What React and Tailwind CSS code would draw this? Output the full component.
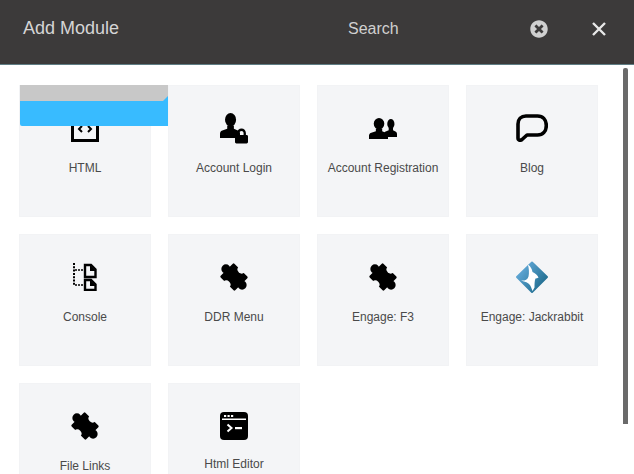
import React from 'react';
import { FaTimesCircle, FaLock } from 'react-icons/fa';

function Puzzle() {
  return (
    <svg className="shrink-0" width="32" height="32" viewBox="0 0 28 28">
      <g transform="rotate(45 14 14)">
        <rect x="5" y="5.500" width="18" height="17" rx="1" fill="#000" />
        <circle cx="4" cy="14" r="4" fill="#000" />
        <circle cx="24" cy="14" r="4" fill="#000" />
        <circle cx="14" cy="4.500" r="3.600" fill="#f4f5f7" />
        <circle cx="14" cy="23.500" r="3.600" fill="#f4f5f7" />
      </g>
    </svg>
  );
}

function HtmlIcon() {
  return (
    <svg width="28" height="28" viewBox="0 0 28 28">
      <rect x="1.500" y="1.500" width="25" height="25" fill="none" stroke="#000" strokeWidth="3" />
      <path d="M11 12l-3 3 3 3M17 12l3 3-3 3" fill="none" stroke="#000" strokeWidth="2" />
    </svg>
  );
}

function Person({ className }) {
  return (
    <svg className={className} viewBox="0 0 18 24" preserveAspectRatio="none">
      <ellipse cx="9.500" cy="6.500" rx="5" ry="6.500" fill="#000" />
      <path d="M6.500 12h6v3l4 2c1 .5 1.500 2 1.500 3v4H0v-4c0-1 .5-2.500 1.500-3l5-2z" fill="#000" />
    </svg>
  );
}

function LoginIcon() {
  return (
    <div className="relative w-[28px] h-[28px]">
      <Person className="absolute left-0 top-[-1px] w-[20px] h-[25px]" />
      <FaLock className="absolute right-0 bottom-[-2px] w-[13px] h-[16px] text-black" />
    </div>
  );
}

function UsersIcon() {
  return (
    <div className="relative w-[28px] h-[21px]">
      <Person className="absolute right-0 top-[1px] w-[13px] h-[18px]" />
      <Person className="absolute left-0 top-0 w-[19px] h-[21px]" />
    </div>
  );
}

function BlogIcon() {
  return (
    <svg width="32" height="28" viewBox="0 0 32 28">
      <path d="M10 2h11.500c5.500 0 8.800 3.800 8.800 9.500s-3.300 9.500-8.800 9.500H11l-5 4.500c-1.500 1.200-4 1-4-1.500V10c0-4.500 3-8 8-8z" fill="none" stroke="#000" strokeWidth="3.600" strokeLinejoin="round" />
    </svg>
  );
}

function ConsoleIcon() {
  return (
    <svg width="24" height="28" viewBox="0 0 24 28">
      <path d="M1 0v23" fill="none" stroke="#000" strokeWidth="2" strokeDasharray="2 1.300" />
      <path d="M2 7h8M2 22h8" fill="none" stroke="#000" strokeWidth="1.600" strokeDasharray="2 1" />
      <path d="M12 2h6l4.500 4.500V14H12zM12 17h6l4.500 4.500V27H12z" fill="none" stroke="#000" strokeWidth="2.400" />
      <path d="M17 2l6 6h-6zM17 17l6 6h-6z" fill="#000" />
    </svg>
  );
}

function RabbitIcon() {
  return (
    <svg width="34" height="34" viewBox="0 0 34 34">
      <defs>
        <linearGradient id="jr" x1="0.1" y1="0.2" x2="0.9" y2="0.8">
          <stop offset="0" stopColor="#62a9d8" />
          <stop offset="1" stopColor="#1f6c8e" />
        </linearGradient>
      </defs>
      <path d="M17 2.500L32 17 17 32 2 17z" fill="url(#jr)" strokeLinejoin="round" stroke="url(#jr)" strokeWidth="2" />
      <path d="M13.500 5c2 1.500 3.500 4 4 7 2.500 1 5 3 6 5.500-1 .5-2 1-3 1-1 2-1 6-1 9l-2 3.500-1.500-4c-1-3-3.500-4.500-7-5.500l-3-1c3 .5 6.500-.5 7.500-4 .8-3.500.5-8-.5-11.500z" fill="#fff" />
    </svg>
  );
}

function EditorIcon() {
  return (
    <svg width="28" height="28" viewBox="0 0 28 28">
      <rect width="28" height="28" rx="4" fill="#000" />
      <rect x="2" y="6.500" width="24" height="1.500" fill="#fff" />
      <path d="M4 3h2.200v2H4zM7.500 3h2.200v2H7.500zM11 3h2.200v2H11z" fill="#fff" />
      <path d="M7.500 12.500l4 3.500-4 3.500" fill="none" stroke="#fff" strokeWidth="2" />
      <rect x="15" y="15" width="7" height="2.200" fill="#fff" />
    </svg>
  );
}

const modules = [
  { name: 'HTML', icon: <HtmlIcon /> },
  { name: 'Account Login', icon: <LoginIcon /> },
  { name: 'Account Registration', icon: <UsersIcon /> },
  { name: 'Blog', icon: <BlogIcon /> },
  { name: 'Console', icon: <ConsoleIcon /> },
  { name: 'DDR Menu', icon: <Puzzle /> },
  { name: 'Engage: F3', icon: <Puzzle /> },
  { name: 'Engage: Jackrabbit', icon: <RabbitIcon /> },
  { name: 'File Links', icon: <Puzzle />, labelClass: 'mt-[19px]' },
  { name: 'Html Editor', icon: <EditorIcon />, labelClass: 'mt-[17px]' },
];

export default function App() {
  return (
    <div className="relative w-[634px] h-[474px] overflow-hidden bg-white font-['Liberation_Sans',Arial,sans-serif]">
      {/* Header */}
      <div className="flex items-center h-[65px] pb-[7px] bg-[#3c3a3a] border-b border-[#5f7d84]">
        <h1 className="ml-[23px] w-[325px] text-[18px] text-[#d5d5d5]">Add Module</h1>
        <span className="w-[182px] text-[16px] text-[#d0d0d0]">Search</span>
        <FaTimesCircle className="w-[18px] h-[18px] text-[#d0d0d0]" />
        <svg className="ml-[44px]" width="14" height="14" viewBox="0 0 14 14">
          <path d="M1 1l12 12M13 1L1 13" stroke="#e8e8e8" strokeWidth="2.400" />
        </svg>
      </div>

      {/* Module grid */}
      <div className="grid grid-cols-[repeat(4,132px)] gap-[17px] pt-[20px] pl-[19px]">
        {modules.map((mod) => (
          <div key={mod.name} className="flex flex-col items-center w-[132px] h-[132px] pt-[28px] bg-[#f4f5f7] border border-[#f2f3f5]">
            <div className="flex items-center justify-center h-[28px]">{mod.icon}</div>
            <p className={`${mod.labelClass || 'mt-[19px]'} text-[12px] leading-[14px] text-[#4a4a4a] whitespace-nowrap`}>{mod.name}</p>
          </div>
        ))}
      </div>

      {/* Drag ghost over the first card */}
      <div className="absolute left-[20px] top-[85px] w-[148px] h-[41px] rounded-bl-[2px] bg-[#38bbff]">
        <div className="h-[16px] bg-[#c8c8c8] [clip-path:polygon(0_0,100%_0,100%_11px,143px_100%,0_100%)]" />
      </div>

      {/* Scrollbar */}
      <div className="absolute left-[623px] top-[68px] w-[5px] h-[356px] rounded-t-[2px] bg-[#6a6a6a]" />
    </div>
  );
}
